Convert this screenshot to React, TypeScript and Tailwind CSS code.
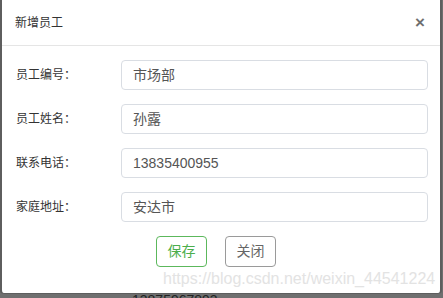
const fields = [
  { label: "员工编号：", value: "市场部" },
  { label: "员工姓名：", value: "孙露" },
  { label: "联系电话：", value: "13835400955" },
  { label: "家庭地址：", value: "安达市" },
];

export default function App() {
  return (
    <div
      className="relative w-[443px] h-[298px] overflow-hidden bg-[#6f6f6f]"
      style={{ fontFamily: '"Liberation Sans", "Noto Sans CJK SC", sans-serif' }}
    >
      <div className="w-[442px] h-[294px] bg-white border-l-2 border-r-2 border-b border-[#5e5e5e] rounded-b-[4px] flex flex-col">
        <div className="h-[46px] flex items-center justify-between pl-[13px] pr-[15px] border-b border-[#e5e5e5]">
          <span className="text-[12px] text-[#333]">新增员工</span>
          <span className="text-[17px] font-bold text-[#6f6f6f] leading-none">×</span>
        </div>
        <div className="flex flex-col gap-[14px] pt-[14px] pl-[14px] pr-[12px]">
          {fields.map((f) => (
            <div key={f.label} className="flex items-center h-[30px]">
              <span className="w-[105px] text-[12px] text-[#333]">{f.label}</span>
              <div className="flex-1 h-[30px] border border-[#d9dde3] rounded-[4px] flex items-center px-[11px] text-[14px] text-[#555]">
                {f.value}
              </div>
            </div>
          ))}
        </div>
        <div className="flex gap-[18px] pl-[154px] mt-[14px]">
          <button className="w-[51px] h-[31px] border border-[#5cb85c] rounded-[4px] text-[14px] text-[#4cae4c] bg-white">
            保存
          </button>
          <button className="w-[51px] h-[31px] border border-[#9a9a9a] rounded-[4px] text-[14px] text-[#666] bg-white">
            关闭
          </button>
        </div>
      </div>
      <div className="pl-[132px] text-[14px] text-[#222] leading-none -mt-[1px]">13875967893</div>
      <div className="absolute left-[163px] top-[271px] text-[16px] text-[#e3e3e3] leading-none whitespace-nowrap">
        https://blog.csdn.net/weixin_44541224
      </div>
    </div>
  );
}
